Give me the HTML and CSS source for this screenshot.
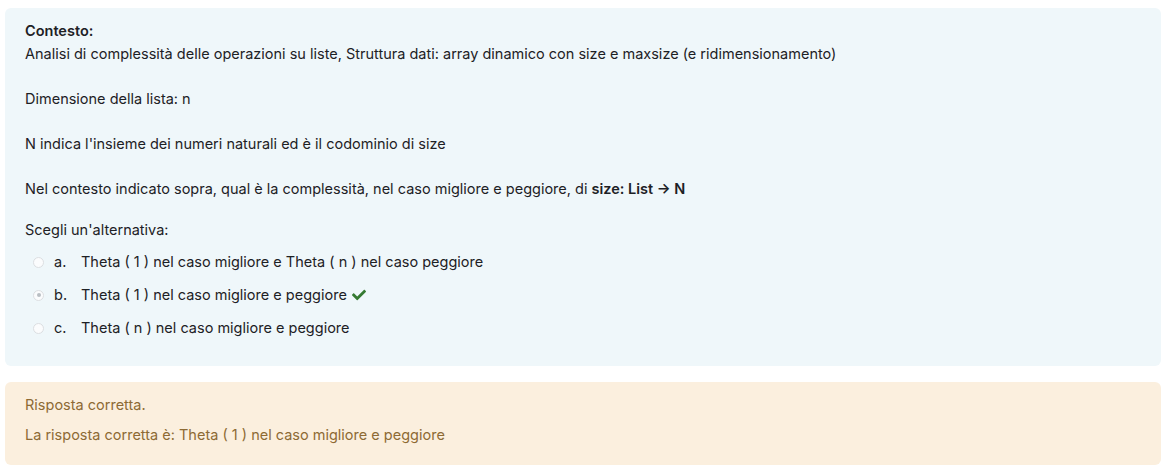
FILE: index.html
```html
<!DOCTYPE html>
<html lang="it">
<head>
<meta charset="utf-8">
<title>Domanda</title>
<link rel="stylesheet" href="styles.css">
</head>
<body>
<div class="que">
  <div class="formulation">
    <div class="qtext">
      <strong class="ctx">Contesto:</strong><br>
      Analisi di complessità delle operazioni su liste, Struttura dati: array dinamico con size e maxsize (e ridimensionamento)<br><br>
      Dimensione della lista: n<br><br>
      N indica l'insieme dei numeri naturali ed è il codominio di size<br><br>
      Nel contesto indicato sopra, qual è la complessità, nel caso migliore e peggiore, di <strong>size: List → N</strong>
    </div>
    <div class="prompt">Scegli un'alternativa:</div>
    <div class="answer">
      <div class="opt">
        <span class="radio"></span>
        <span class="num">a.</span>
        <span class="txt">Theta ( 1 ) nel caso migliore e Theta ( n ) nel caso peggiore</span>
      </div>
      <div class="opt">
        <span class="radio checked"></span>
        <span class="num">b.</span>
        <span class="txt">Theta ( 1 ) nel caso migliore e peggiore</span>
        <svg class="check" viewBox="0 0 512 512" width="14" height="14" aria-hidden="true"><path fill="#357a32" d="M173.898 439.404l-166.4-166.4c-9.997-9.997-9.997-26.206 0-36.204l36.203-36.204c9.997-9.998 26.207-9.998 36.204 0L192 312.690 432.095 72.596c9.997-9.997 26.207-9.997 36.204 0l36.203 36.204c9.997 9.997 9.997 26.206 0 36.204l-294.4 294.401c-9.998 9.997-26.207 9.997-36.204-.001z"/></svg>
      </div>
      <div class="opt">
        <span class="radio"></span>
        <span class="num">c.</span>
        <span class="txt">Theta ( n ) nel caso migliore e peggiore</span>
      </div>
    </div>
  </div>
  <div class="outcome">
    <div class="feedback">Risposta corretta.</div>
    <div class="rightanswer">La risposta corretta è: Theta ( 1 ) nel caso migliore e peggiore</div>
  </div>
</div>
</body>
</html>
```
FILE: styles.css
```css
html, body {
  margin: 0;
  padding: 0;
  background: #ffffff;
}
body {
  font-family: Inter, "Noto Sans", sans-serif;
  font-size: 14.5px;
  line-height: 22.5px;
  color: #1d2125;
}
.que {
  padding: 8px 1px 0 5px;
}
.formulation {
  background: #eff7fa;
  border-radius: 6px;
  padding: 12px 20px 21px;
}
.qtext strong {
  font-weight: 600;
}
.qtext {
  margin-bottom: 19px;
}
.answer {
  margin-top: 4px;
}
.opt {
  display: flex;
  align-items: center;
  height: 33px;
  padding-left: 8px;
}
.radio {
  width: 11px;
  height: 11px;
  border: 1px solid #dcdfe2;
  border-radius: 50%;
  background: #fbfcfd;
  box-sizing: border-box;
  margin-right: 10px;
  display: flex;
  align-items: center;
  justify-content: center;
}
.radio.checked::after {
  content: "";
  width: 4px;
  height: 4px;
  border-radius: 50%;
  background: #b9bec3;
}
.num {
  width: 27px;
}
.check {
  margin-left: 5px;
}
.outcome {
  margin-top: 16px;
  background: #fbefde;
  color: #8d6a34;
  border-radius: 6px;
  padding: 12px 20px 19px;
}
.rightanswer {
  margin-top: 7.5px;
}
```
